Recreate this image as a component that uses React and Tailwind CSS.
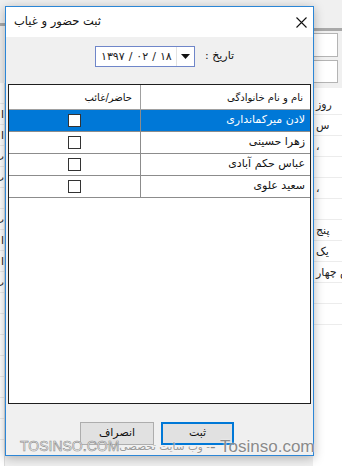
import React from 'react'

const ROWS = [
  { name: 'لادن میرکمانداری', selected: true },
  { name: 'زهرا حسینی' },
  { name: 'عباس حکم آبادی' },
  { name: 'سعید علوی' },
]

const BACK_RIGHT = ['روز', 'س', '،', '', '،', '', 'پنج', 'یک', 'ش چهار', '', '']
const BACK_LEFT = ['', 'ا', 'ا', 'ب', 'ب', '', 'ب', 'ا', 'ا', 'ب', '', '', '', '', '', '', '']

function CloseIcon() {
  return (
    <svg width="11" height="11" viewBox="0 0 11 11" fill="none" stroke="#111" strokeWidth="1.1">
      <path d="M0.5 0.5 L10.5 10.5 M10.5 0.5 L0.5 10.5" />
    </svg>
  )
}

function Background() {
  return (
    <div className="flex h-full w-full justify-between">
      {/* left strip of the window behind */}
      <div className="flex w-[5px] flex-col overflow-hidden">
        <div className="mt-[23px] h-[3px] bg-[#a9a9a9]" />
        <div className="mt-[57px] flex flex-1 flex-col border-r border-[#dcdcdc] bg-white">
          {BACK_LEFT.map((t, i) => (
            <div key={i} dir="rtl" className="flex h-[21px] items-center justify-start overflow-hidden whitespace-nowrap border-b border-[#ececec] font-['DejaVu_Sans',sans-serif] text-[11px] leading-none text-[#222]">
              {t}
            </div>
          ))}
        </div>
      </div>

      {/* right strip of the window behind */}
      <div className="flex w-[29px] flex-col overflow-hidden">
        <div className="mt-[28px] h-[3px] bg-[#a9a9a9]" />
        <div className="mt-[2px] mr-[4px] h-[24px] border border-[#b4b4b4] bg-white" />
        <div className="mt-[3px] mr-[4px] h-[23px] border border-[#b4b4b4] bg-white" />
        <div className="mt-[5px] flex flex-1 flex-col bg-white pt-[6px]">
          {BACK_RIGHT.map((t, i) => (
            <div key={i} dir="rtl" className="flex h-[21px] items-center justify-end overflow-hidden whitespace-nowrap border-b border-[#ececec] pl-[3px] font-['DejaVu_Sans',sans-serif] text-[11px] leading-none text-[#222]">
              {t}
            </div>
          ))}
        </div>
      </div>
    </div>
  )
}

function DatePicker() {
  return (
    <div className="flex h-[21px] w-[100px] border border-[#6f86c9] bg-white">
      <div dir="ltr" className="flex flex-1 items-center gap-[4px] pl-[5px] font-['DejaVu_Sans',sans-serif] text-[11px] leading-none text-[#222]">
        <span>۱۳۹۷</span>
        <span>/</span>
        <span>۰۲</span>
        <span>/</span>
        <span>۱۸</span>
      </div>
      <div className="flex w-[18px] items-center justify-center border-l border-[#e2e2e2]">
        <svg width="9" height="5" viewBox="0 0 9 5">
          <path d="M0 0 H9 L4.5 5 Z" fill="#111" />
        </svg>
      </div>
    </div>
  )
}

function Grid() {
  return (
    <div dir="rtl" className="mx-[2px] mt-[17px] flex h-[320px] flex-col border border-[#1e1e1e] bg-white font-['DejaVu_Sans',sans-serif]">
      <div className="flex h-[25px] border-b border-[#a0a0a0] text-[10px] text-[#111]">
        <div className="flex w-[170px] items-center border-l border-[#a0a0a0] pr-[7px]">نام و نام خانوادگی</div>
        <div className="flex flex-1 items-center pr-[8px]">حاضر/غائب</div>
      </div>
      {ROWS.map((r) => (
        <div
          key={r.name}
          className={`flex h-[22px] border-b border-[#8c8c8c] text-[11px] ${r.selected ? 'bg-[#0078d7] text-white' : 'text-[#111]'}`}
        >
          <div className="flex w-[170px] items-center border-l border-[#8c8c8c] pr-[5px]">{r.name}</div>
          <div className="flex flex-1 items-center justify-center">
            <div className="h-[13px] w-[13px] border border-[#333] bg-white" />
          </div>
        </div>
      ))}
    </div>
  )
}

export default function App() {
  return (
    <div className="relative h-[466px] w-[342px] overflow-hidden bg-[#f0f0f0]">
      <Background />

      {/* dialog window */}
      <div className="absolute left-[5px] top-[6px] flex h-[450px] w-[309px] flex-col border border-[#2c86d6] bg-[#f0f0f0] shadow-[0_2px_10px_rgba(0,0,0,0.28)]">
        <div className="flex h-[30px] items-center justify-between bg-white pl-[8px] pr-[6px]">
          <span dir="rtl" className="font-['DejaVu_Sans',sans-serif] text-[11.5px] text-[#111]">ثبت حضور و غیاب</span>
          <CloseIcon />
        </div>

        <div className="flex flex-1 flex-col">
          <div className="mt-[9px] flex items-center gap-[10px] pl-[89px]">
            <DatePicker />
            <span dir="rtl" className="font-['DejaVu_Sans',sans-serif] text-[11px] text-[#111]">تاریخ :</span>
          </div>

          <Grid />

          <div className="mt-[18px] flex gap-[7px] pl-[74px] font-['DejaVu_Sans',sans-serif] text-[11px] text-[#111]">
            <button className="h-[23px] w-[74px] border border-[#adadad] bg-[#e1e1e1]">انصراف</button>
            <button className="h-[23px] w-[73px] border-2 border-[#0078d7] bg-[#e1e1e1]">ثبت</button>
          </div>
        </div>
      </div>

      {/* watermark over the picture */}
      <div className="pointer-events-none absolute left-[20px] top-[434px] flex w-[294px] items-center justify-between whitespace-nowrap">
        <span className="font-['Liberation_Sans',sans-serif] text-[14px] text-white [-webkit-text-stroke:0.6px_#8a8a8a]">TOSINSO.COM</span>
        <span dir="rtl" className="font-['DejaVu_Sans',sans-serif] text-[10.5px] text-[#9a9a9a] [text-shadow:0_0_2px_#fff]">- وب سایت تخصصی</span>
        <span className="font-['Liberation_Sans',sans-serif] text-[17px] text-[#8a8a8a] [text-shadow:0_0_2px_#fff]">- Tosinso.com</span>
      </div>
    </div>
  )
}
